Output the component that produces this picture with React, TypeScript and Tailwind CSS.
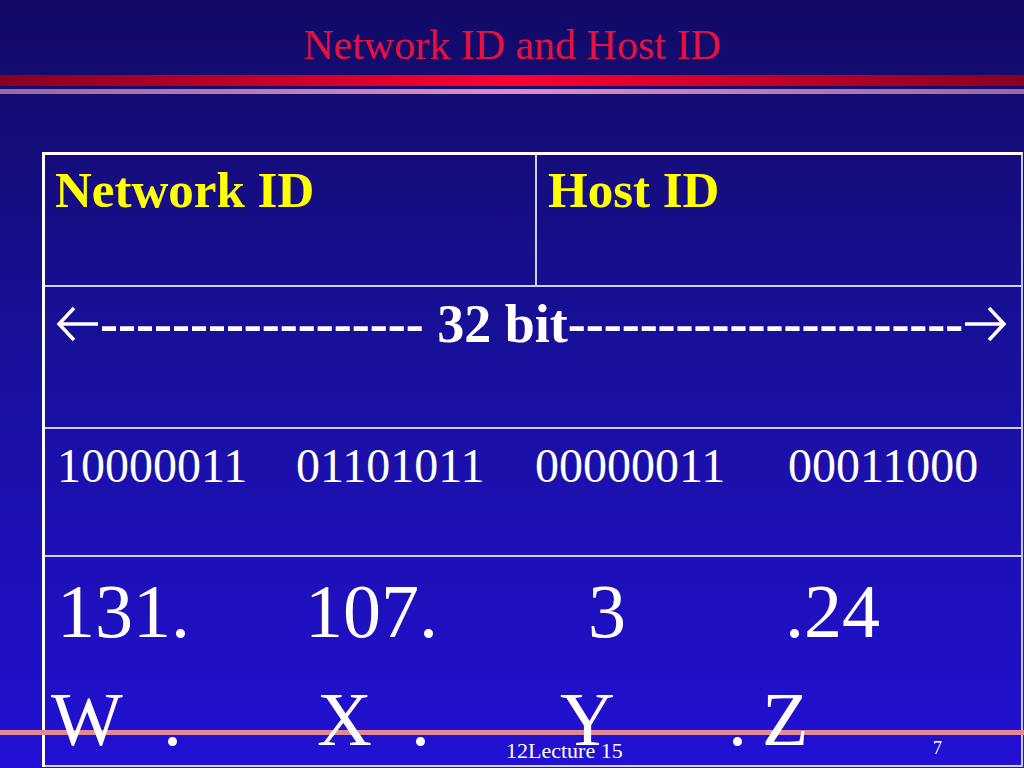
const serif = "font-['Liberation_Serif','Times_New_Roman',serif]";

function Arrow({ dir }: { dir: "left" | "right" }) {
  return (
    <svg width="44" height="38" viewBox="0 0 44 38" className="shrink-0" aria-hidden>
      {dir === "left" ? (
        <path d="M42 19 H4 M18 3 L3 19 L18 35" fill="none" stroke="white" strokeWidth="3.5" strokeLinejoin="miter" />
      ) : (
        <path d="M2 19 H40 M26 3 L41 19 L26 35" fill="none" stroke="white" strokeWidth="3.5" strokeLinejoin="miter" />
      )}
    </svg>
  );
}

export default function App() {
  return (
    <div
      className={`relative w-[1024px] h-[768px] overflow-hidden bg-gradient-to-b from-[#120a66] via-[#1910a0] to-[#2210d4] ${serif}`}
    >
      {/* title */}
      <div className="pt-[24px] text-center text-[42px] leading-none text-[#e8103c]">Network ID and Host ID</div>
      <div className="mt-[9px] h-[11px] bg-gradient-to-r from-[#8a0020] via-[#ff0030] to-[#8a0020]" />
      <div className="mt-[3px] h-[5px] bg-gradient-to-r from-[#9a6a9a] via-[#dc90c0] to-[#9a6a9a]" />

      {/* table */}
      <div className="ml-[42px] mt-[58px] w-[981px] border-t-[3px] border-l-[3px] border-t-white border-l-white border-r-2 border-r-[#c8c8ec] flex flex-col">
        <div className="h-[132px] flex border-b-2 border-[#d0d0f0]">
          <div className="w-[492px] border-r-2 border-[#d0d0f0] pl-[10px] pt-[10px] text-[51px] leading-none font-bold text-[#ffff00]">
            Network ID
          </div>
          <div className="flex-1 pl-[11px] pt-[10px] text-[51px] leading-none font-bold text-[#ffff00]">Host ID</div>
        </div>

        <div className="h-[142px] flex items-start border-b-2 border-[#d0d0f0] pl-[11px] pt-[10px] text-[54px] leading-none font-bold text-white">
          <span className="mt-[8px]">
            <Arrow dir="left" />
          </span>
          <span className="whitespace-pre">------------------ 32 bit----------------------</span>
          <span className="mt-[8px]">
            <Arrow dir="right" />
          </span>
        </div>

        <div className="h-[128px] flex border-b-2 border-[#d0d0f0] pl-[12px] pt-[13px] text-[48px] leading-none text-white">
          <span className="w-[239px]">10000011</span>
          <span className="w-[239px]">01101011</span>
          <span className="w-[253px]">00000011</span>
          <span>00011000</span>
        </div>

        <div className="relative z-20 h-[210px] border-b-2 border-[#d0d0f0] pl-[12px] text-[76px] leading-[108px] text-white">
          <div className="flex">
            <span className="w-[248px]">131.</span>
            <span className="w-[283px]">107.</span>
            <span className="w-[197px]">3</span>
            <span>.24</span>
          </div>
          <div className="flex -ml-[6px]">
            <span className="w-[112px]">W</span>
            <span className="w-[154px]">.</span>
            <span className="w-[94px]">X</span>
            <span className="w-[149px]">.</span>
            <span className="w-[168px]">Y</span>
            <span className="w-[34px]">.</span>
            <span>Z</span>
          </div>
        </div>
      </div>

      {/* footer line */}
      <div className="absolute left-0 right-0 top-[730px] h-[5px] bg-[#e08898] z-10" />
      <div className="absolute z-30 left-[506px] top-[740px] text-[22px] leading-none text-white">12Lecture 15</div>
      <div className="absolute z-30 left-[933px] top-[739px] text-[18px] leading-none text-white">7</div>
    </div>
  );
}
